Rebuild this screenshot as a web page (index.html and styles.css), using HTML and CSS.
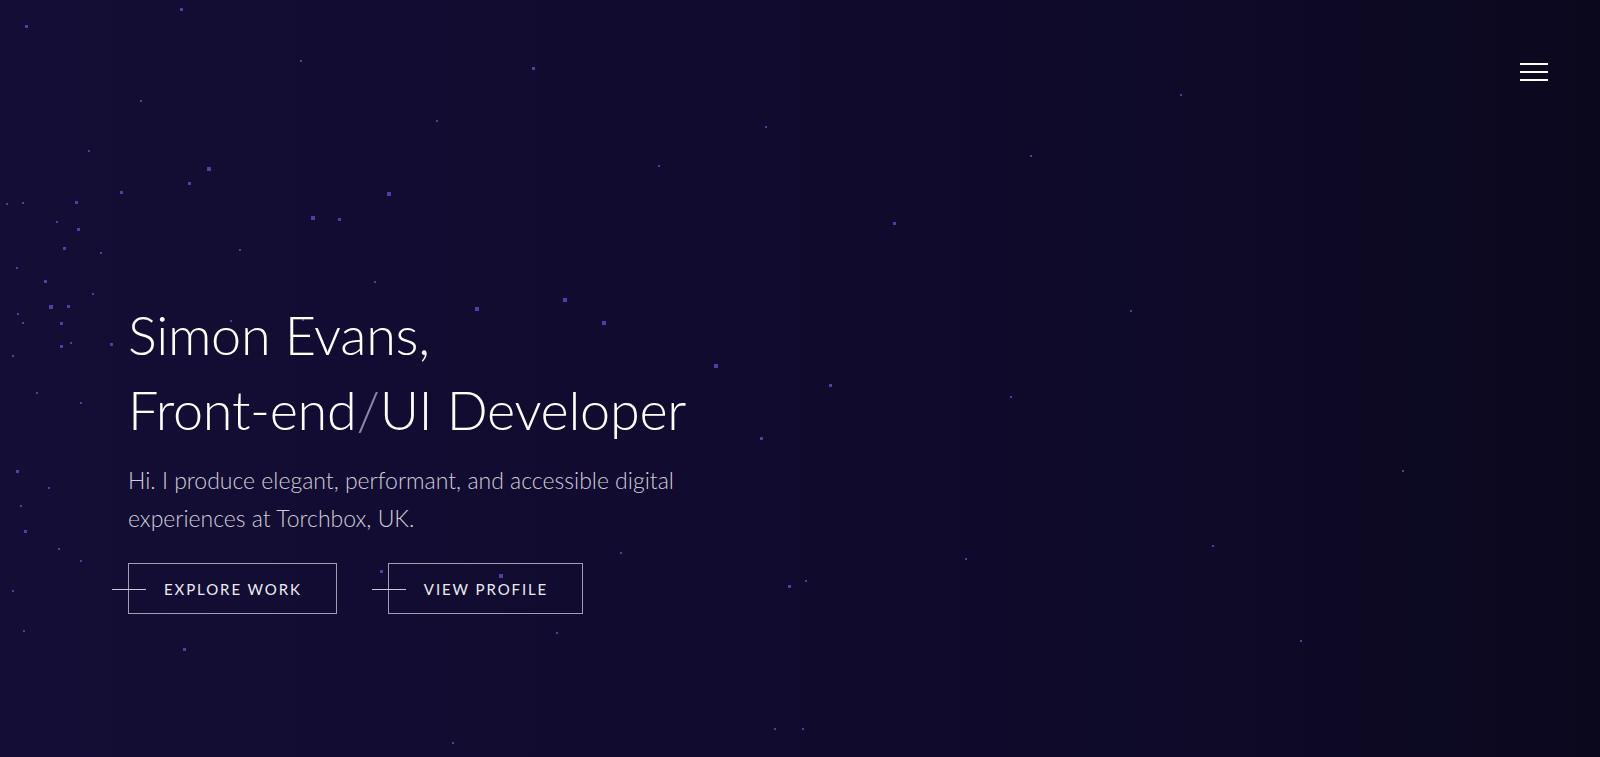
FILE: index.html
```html
<!DOCTYPE html>
<html lang="en">
<head>
<meta charset="utf-8">
<title>Simon Evans, Front-end/UI Developer</title>
<link rel="stylesheet" href="styles.css">
</head>
<body>
<main class="hero">
  <svg class="stars" width="1600" height="757" viewBox="0 0 1600 757" aria-hidden="true">
    <g fill="#5a49b8">
      <rect x="25" y="25" width="3" height="3"/>
      <rect x="180" y="8" width="3" height="3"/>
      <rect x="532" y="67" width="3" height="3"/>
      <rect x="765" y="126" width="2" height="2"/>
      <rect x="387" y="192" width="4" height="4"/>
      <rect x="207" y="167" width="4" height="4"/>
      <rect x="188" y="182" width="3" height="3"/>
      <rect x="120" y="191" width="3" height="3"/>
      <rect x="75" y="201" width="3" height="3"/>
      <rect x="22" y="202" width="2" height="2"/>
      <rect x="311" y="216" width="4" height="4"/>
      <rect x="338" y="218" width="3" height="3"/>
      <rect x="56" y="221" width="2" height="2"/>
      <rect x="77" y="228" width="3" height="3"/>
      <rect x="63" y="247" width="3" height="3"/>
      <rect x="100" y="252" width="2" height="2"/>
      <rect x="239" y="249" width="2" height="2"/>
      <rect x="16" y="267" width="2" height="2"/>
      <rect x="44" y="280" width="3" height="3"/>
      <rect x="374" y="281" width="2" height="2"/>
      <rect x="92" y="293" width="2" height="2"/>
      <rect x="49" y="305" width="4" height="4"/>
      <rect x="67" y="305" width="3" height="3"/>
      <rect x="17" y="313" width="2" height="2"/>
      <rect x="475" y="307" width="4" height="4"/>
      <rect x="563" y="298" width="4" height="4"/>
      <rect x="602" y="321" width="4" height="4"/>
      <rect x="60" y="322" width="3" height="3"/>
      <rect x="22" y="322" width="2" height="2"/>
      <rect x="110" y="343" width="3" height="3"/>
      <rect x="60" y="345" width="3" height="3"/>
      <rect x="714" y="364" width="4" height="4"/>
      <rect x="829" y="384" width="3" height="3"/>
      <rect x="12" y="355" width="2" height="2"/>
      <rect x="36" y="392" width="2" height="2"/>
      <rect x="80" y="402" width="2" height="2"/>
      <rect x="760" y="437" width="3" height="3"/>
      <rect x="16" y="470" width="3" height="3"/>
      <rect x="48" y="487" width="2" height="2"/>
      <rect x="20" y="505" width="2" height="2"/>
      <rect x="24" y="530" width="3" height="3"/>
      <rect x="58" y="548" width="2" height="2"/>
      <rect x="80" y="560" width="2" height="2"/>
      <rect x="12" y="590" width="2" height="2"/>
      <rect x="380" y="570" width="3" height="3"/>
      <rect x="499" y="574" width="4" height="4"/>
      <rect x="620" y="552" width="2" height="2"/>
      <rect x="788" y="585" width="3" height="3"/>
      <rect x="805" y="580" width="2" height="2"/>
      <rect x="183" y="648" width="3" height="3"/>
      <rect x="23" y="630" width="2" height="2"/>
      <rect x="556" y="632" width="2" height="2"/>
      <rect x="774" y="728" width="2" height="2"/>
      <rect x="802" y="728" width="2" height="2"/>
      <rect x="452" y="742" width="2" height="2"/>
      <rect x="965" y="558" width="2" height="2"/>
      <rect x="1212" y="545" width="2" height="2"/>
      <rect x="893" y="222" width="3" height="3"/>
      <rect x="1030" y="155" width="2" height="2"/>
      <rect x="1180" y="94" width="2" height="2"/>
      <rect x="1010" y="396" width="2" height="2"/>
      <rect x="1402" y="470" width="2" height="2"/>
      <rect x="658" y="165" width="2" height="2"/>
      <rect x="436" y="120" width="2" height="2"/>
      <rect x="300" y="60" width="2" height="2"/>
      <rect x="140" y="100" width="2" height="2"/>
      <rect x="88" y="150" width="2" height="2"/>
      <rect x="6" y="203" width="2" height="2"/>
      <rect x="230" y="320" width="2" height="2"/>
      <rect x="302" y="319" width="2" height="2"/>
      <rect x="70" y="342" width="2" height="2"/>
      <rect x="1130" y="310" width="2" height="2"/>
      <rect x="1300" y="640" width="2" height="2"/>
    </g>
  </svg>

  <header class="topbar">
    <button class="menu" type="button" aria-label="Open menu">
      <span class="menu-line"></span>
      <span class="menu-line"></span>
      <span class="menu-line"></span>
    </button>
  </header>

  <section class="intro">
    <h1 class="title">Simon Evans,<br>Front-end<span class="slash">/</span>UI Developer</h1>
    <p class="lead">Hi. I produce elegant, performant, and accessible digital experiences at Torchbox, UK.</p>
    <div class="actions">
      <a class="btn btn-work" href="#work">Explore work</a>
      <a class="btn btn-profile" href="#profile">View profile</a>
    </div>
  </section>
</main>
</body>
</html>
```

FILE: styles.css
```css
* {
  box-sizing: border-box;
}

html, body {
  margin: 0;
  padding: 0;
}

body {
  background: #110b2e;
  font-family: Lato, "Noto Sans", sans-serif;
  color: #ffffff;
  overflow: hidden;
}

.hero {
  position: relative;
  height: 757px;
  background: linear-gradient(to right, #140d35 0%, #110b2f 45%, #0e0a28 75%, #0b081e 100%);
  display: flex;
  flex-direction: column;
}

.stars {
  position: absolute;
  left: 0;
  top: 0;
  pointer-events: none;
  opacity: 0.85;
}

.topbar {
  position: relative;
  display: flex;
  justify-content: flex-end;
  padding: 63px 52px 0 0;
}

.menu {
  display: flex;
  flex-direction: column;
  gap: 6px;
  width: 28px;
  padding: 0;
  background: none;
  border: 0;
  cursor: pointer;
}

.menu-line {
  display: block;
  width: 28px;
  height: 2px;
  background: #ffffff;
}

.intro {
  position: relative;
  padding: 216px 0 0 128px;
  max-width: 720px;
}

.title {
  margin: 0;
  font-weight: 300;
  font-size: 54px;
  line-height: 75px;
  letter-spacing: -0.3px;
  color: #ffffff;
}

.slash {
  color: #8b87a3;
}

.lead {
  margin: 14px 0 0;
  max-width: 580px;
  font-weight: 300;
  font-size: 23px;
  line-height: 38px;
  color: #cfcdd8;
}

.actions {
  display: flex;
  gap: 51px;
  margin-top: 26px;
}

.btn {
  position: relative;
  display: flex;
  align-items: center;
  height: 51px;
  padding: 0 34px 0 35px;
  border: 1px solid #a19eb3;
  color: #ecebf2;
  text-decoration: none;
  text-transform: uppercase;
  font-size: 15px;
  font-weight: 400;
  letter-spacing: 1.9px;
}

.btn::before {
  content: "";
  position: absolute;
  left: -17px;
  top: 50%;
  width: 34px;
  height: 1px;
  background: #c9c6d6;
}
```
